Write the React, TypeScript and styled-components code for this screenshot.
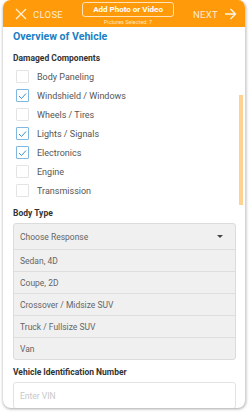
import styled, { createGlobalStyle } from "styled-components";

const GlobalStyle = createGlobalStyle`
  html, body {
    margin: 0;
    padding: 0;
    background: #ffffff;
    font-family: Roboto, "Liberation Sans", Arial, sans-serif;
  }
`;

const Page = styled.div`
  width: 250px;
  height: 414px;
  padding: 0 4px 6px 3px;
  box-sizing: border-box;
`;

const Card = styled.div`
  position: relative;
  height: 408px;
  border-radius: 8px;
  background: #ffffff;
  box-shadow: 0 1px 3px rgba(0, 0, 0, 0.35);
  border-right: 1px solid #d6d6d6;
  overflow: hidden;
  display: flex;
  flex-direction: column;
`;

const Header = styled.div`
  height: 27px;
  flex-shrink: 0;
  background: #ff9a0a;
  display: flex;
  align-items: flex-start;
  justify-content: space-between;
  padding: 0 8px 0 12px;
`;

const NavButton = styled.div`
  display: flex;
  align-items: center;
  gap: 6px;
  height: 28px;
  color: rgba(255, 255, 255, 0.82);
  font-size: 9.5px;
  letter-spacing: 0.3px;
`;

const Center = styled.div`
  display: flex;
  flex-direction: column;
  align-items: center;
  padding-top: 2px;
`;

const PhotoButton = styled.div`
  width: 90px;
  height: 13px;
  border: 1px solid #ffe2b8;
  border-radius: 3px;
  color: #ffffff;
  font-size: 8px;
  font-weight: 700;
  display: flex;
  align-items: center;
  justify-content: center;
`;

const Selected = styled.div`
  margin-top: 2px;
  font-size: 5.5px;
  color: #ffe6bf;
`;

const Body = styled.div`
  padding: 3px 9px 0 10px;
  display: flex;
  flex-direction: column;
`;

const Title = styled.h1`
  margin: 0;
  font-size: 10.6px;
  font-weight: 700;
  color: #1b80c4;
  line-height: 14px;
`;

const Label = styled.div<{ top: number }>`
  margin-top: ${(p) => p.top}px;
  font-size: 8.5px;
  font-weight: 700;
  color: #333333;
  line-height: 11px;
`;

const CheckList = styled.div`
  display: flex;
  flex-direction: column;
  margin-top: 3px;
`;

const CheckRow = styled.div`
  height: 19px;
  display: flex;
  align-items: center;
  gap: 8px;
  padding-left: 3px;
  font-size: 9px;
  color: #555555;
`;

const Box = styled.div<{ checked: boolean }>`
  width: 11px;
  height: 11px;
  border: 1px solid ${(p) => (p.checked ? "#7fb8e0" : "#e4e4e4")};
  border-radius: 1px;
  display: flex;
  align-items: center;
  justify-content: center;
`;

const Select = styled.div`
  margin-top: 4px;
  border: 1px solid #dcdcdc;
  border-radius: 3px;
  background: #f0f0f0;
  display: flex;
  flex-direction: column;
`;

const Option = styled.div<{ first?: boolean }>`
  height: ${(p) => (p.first ? 25 : 21)}px;
  display: flex;
  align-items: center;
  justify-content: space-between;
  padding: 0 12px 0 6px;
  font-size: 8.5px;
  color: #666666;
  border-top: ${(p) => (p.first ? "none" : "1px solid #dedede")};
`;

const Caret = styled.span`
  width: 0;
  height: 0;
  border-left: 3px solid transparent;
  border-right: 3px solid transparent;
  border-top: 3.5px solid #444444;
`;

const Input = styled.div`
  margin-top: 4px;
  height: 25px;
  border: 1px solid #e2e2e2;
  border-radius: 3px;
  display: flex;
  align-items: center;
  padding-left: 6px;
  font-size: 8.5px;
  color: #c8c8c8;
`;

const Scrollbar = styled.div`
  position: absolute;
  right: 2px;
  top: 95px;
  width: 4px;
  height: 110px;
  background: #ffd291;
`;

const components = [
  { name: "Body Paneling", checked: false },
  { name: "Windshield / Windows", checked: true },
  { name: "Wheels / Tires", checked: false },
  { name: "Lights / Signals", checked: true },
  { name: "Electronics", checked: true },
  { name: "Engine", checked: false },
  { name: "Transmission", checked: false },
];

const bodyTypes = [
  "Sedan, 4D",
  "Coupe, 2D",
  "Crossover / Midsize SUV",
  "Truck / Fullsize SUV",
  "Van",
];

const App = () => {
  return (
    <Page>
      <GlobalStyle />
      <Card>
        <Header>
          <NavButton>
            <svg width="12" height="12" viewBox="0 0 12 12">
              <path
                d="M1 1 L11 11 M11 1 L1 11"
                stroke="rgba(255,255,255,0.85)"
                strokeWidth="1.3"
                fill="none"
              />
            </svg>
            <span>CLOSE</span>
          </NavButton>
          <Center>
            <PhotoButton>Add Photo or Video</PhotoButton>
            <Selected>Pictures Selected: 7</Selected>
          </Center>
          <NavButton>
            <span>NEXT</span>
            <svg width="13" height="12" viewBox="0 0 13 12">
              <path
                d="M1 6 H11.5 M6.5 1 L11.5 6 L6.5 11"
                stroke="rgba(255,255,255,0.9)"
                strokeWidth="1.4"
                fill="none"
              />
            </svg>
          </NavButton>
        </Header>
        <Body>
          <Title>Overview of Vehicle</Title>
          <Label top={9}>Damaged Components</Label>
          <CheckList>
            {components.map((c) => (
              <CheckRow key={c.name}>
                <Box checked={c.checked}>
                  {c.checked && (
                    <svg width="9" height="8" viewBox="0 0 9 8">
                      <path
                        d="M1 4 L3.5 6.5 L8 1.5"
                        stroke="#3d8fd1"
                        strokeWidth="1"
                        fill="none"
                      />
                    </svg>
                  )}
                </Box>
                <span>{c.name}</span>
              </CheckRow>
            ))}
          </CheckList>
          <Label top={8}>Body Type</Label>
          <Select>
            <Option first>
              <span>Choose Response</span>
              <Caret />
            </Option>
            {bodyTypes.map((t) => (
              <Option key={t}>{t}</Option>
            ))}
          </Select>
          <Label top={7}>Vehicle Identification Number</Label>
          <Input>Enter VIN</Input>
        </Body>
        <Scrollbar />
      </Card>
    </Page>
  );
};

export default App;
